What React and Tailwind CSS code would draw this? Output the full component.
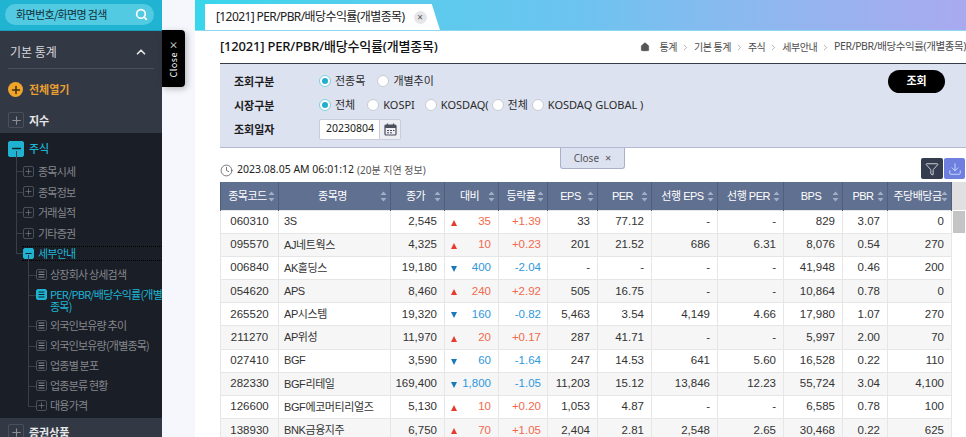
import React from "react";
import { Search, ChevronUp, Plus, Minus, House, ChevronRight, Clock, Funnel, Download } from "lucide-react";

const sans = "font-['Noto_Sans','Noto_Sans_CJK_KR',sans-serif]";
const cjk = "font-['Liberation_Sans','Noto_Sans_CJK_KR',sans-serif]";

const COLS = [
  ["종목코드", 58], ["종목명", 112], ["종가", 54], ["대비", 54], ["등락률", 49], ["EPS", 50],
  ["PER", 54], ["선행 EPS", 66], ["선행 PER", 66], ["BPS", 59], ["PBR", 45], ["주당배당금", 64],
];

const ROWS = [
  ["060310", "3S", "2,545", "u", "35", "+1.39", "33", "77.12", "-", "-", "829", "3.07", "0"],
  ["095570", "AJ네트웍스", "4,325", "u", "10", "+0.23", "201", "21.52", "686", "6.31", "8,076", "0.54", "270"],
  ["006840", "AK홀딩스", "19,180", "d", "400", "-2.04", "-", "-", "-", "-", "41,948", "0.46", "200"],
  ["054620", "APS", "8,460", "u", "240", "+2.92", "505", "16.75", "-", "-", "10,864", "0.78", "0"],
  ["265520", "AP시스템", "19,320", "d", "160", "-0.82", "5,463", "3.54", "4,149", "4.66", "17,980", "1.07", "270"],
  ["211270", "AP위성", "11,970", "u", "20", "+0.17", "287", "41.71", "-", "-", "5,997", "2.00", "70"],
  ["027410", "BGF", "3,590", "d", "60", "-1.64", "247", "14.53", "641", "5.60", "16,528", "0.22", "110"],
  ["282330", "BGF리테일", "169,400", "d", "1,800", "-1.05", "11,203", "15.12", "13,846", "12.23", "55,724", "3.04", "4,100"],
  ["126600", "BGF에코머티리얼즈", "5,130", "u", "10", "+0.20", "1,053", "4.87", "-", "-", "6,585", "0.78", "100"],
  ["138930", "BNK금융지주", "6,750", "u", "70", "+1.05", "2,404", "2.81", "2,548", "2.65", "30,468", "0.22", "625"],
];

function SortIcon() {
  return (
    <svg width="7" height="11" viewBox="0 0 7 11" className="absolute right-[3px] top-[9px]">
      <path d="M3.5 0.5 L6.5 4 H0.5 Z" fill="#9fb0c8" />
      <path d="M3.5 10.5 L6.5 7 H0.5 Z" fill="#9fb0c8" />
    </svg>
  );
}

function Square({ open, active, small, doc, className = "" }) {
  const size = small ? "w-[11px] h-[11px]" : "w-[16px] h-[16px]";
  const tone = active ? "bg-[#1fb3d1] border-[#1fb3d1] text-[#10222b]" : "border-[#4a4f5c] text-[#8c8f96]";
  return (
    <span className={`${size} ${tone} border rounded-[2px] flex items-center justify-center shrink-0 ${className}`}>
      {doc ? (
        <svg width="7" height="7" viewBox="0 0 7 7"><path d="M0.5 1 H6.5 M0.5 3.5 H6.5 M0.5 6 H6.5" stroke="currentColor" strokeWidth="1" /></svg>
      ) : open ? (
        <Minus size={small ? 9 : 13} strokeWidth={3} />
      ) : (
        <Plus size={small ? 9 : 13} strokeWidth={small ? 1.5 : 2} />
      )}
    </span>
  );
}

function Lv2({ children, open, active, dotted, last }) {
  return (
    <div className="relative h-[20.6px] shrink-0 flex items-center pl-[23px]">
      <span className={`absolute left-[16px] top-[-10px] w-px ${last ? "h-[20px]" : "h-[21px]"} bg-[#3a3e49]`} />
      <span className="absolute left-[16px] top-[10px] w-[7px] h-px bg-[#3a3e49]" />
      {dotted && <span className="absolute left-[22px] right-0 top-[3px] bottom-[3px] border-y border-dotted border-[#000]" />}
      <Square small open={open} active={active} />
      <span className={`ml-[4px] text-[11px] tracking-[-0.8px] ${active ? "text-[#1fb5d5]" : "text-[#85878c]"}`}>{children}</span>
    </div>
  );
}

function Lv3({ children, plus, active, tall }) {
  return (
    <div className={`relative shrink-0 flex pl-[36px] ${tall ? "h-[31px] items-start" : "h-[20px] items-center"}`}>
      <span className="absolute left-[28px] top-[-10px] w-px h-[20px] bg-[#3a3e49]" />
      {tall && <span className="absolute left-[28px] top-[10px] w-px h-[21px] bg-[#3a3e49]" />}
      <span className="absolute left-[28px] top-[10px] w-[8px] h-px bg-[#3a3e49]" />
      <Square small doc={!plus} active={active} className={tall ? "mt-[4px]" : ""} />
      <span className={`ml-[3px] text-[11px] tracking-[-0.8px] whitespace-pre ${tall ? "leading-[12px] mt-[3px]" : "leading-[13px]"} ${active ? "text-[#1fb5d5]" : "text-[#85878c]"}`}>{children}</span>
    </div>
  );
}

function Sidebar() {
  return (
    <aside className="w-[162px] shrink-0 h-full flex flex-col">
      <div className="h-[31px] shrink-0 bg-[#20b4d2] pl-[5px] pr-[5px] pt-[4px] border-b border-[#1d9fba]">
        <div className="h-[21px] w-[149px] rounded-full bg-[#52cbe2] flex items-center pl-[11px] pr-[6px] justify-between">
          <span className="text-[11px] text-[#12303a] tracking-[-0.65px]">화면번호/화면명 검색</span>
          <Search size={13} strokeWidth={3} className="text-white" />
        </div>
      </div>
      <div className="h-[102px] shrink-0 bg-[#333845] px-[8px] flex flex-col">
        <div className="h-[38px] flex items-center justify-between pl-[2px] pr-[6px] border-b border-[#4b4f5b] shrink-0">
          <span className="text-[12px] text-[#d8d9dc] mt-[4px]">기본 통계</span>
          <ChevronUp size={14} strokeWidth={3} className="text-[#e3e4e6] mt-[4px]" />
        </div>
        <div className="flex items-center h-[41px] shrink-0">
          <span className="w-[15px] h-[15px] rounded-full bg-[#f0a52a] flex items-center justify-center text-[#3a2c10]">
            <Plus size={12} strokeWidth={3} />
          </span>
          <span className="ml-[6px] text-[11px] font-bold text-[#e89f32]">전체열기</span>
        </div>
        <div className="flex items-center h-[19px] shrink-0 pt-[1px]">
          <Square />
          <span className="ml-[5px] text-[11px] font-semibold text-[#e6e7e9]">지수</span>
        </div>
      </div>
      <div className="h-[285px] shrink-0 bg-[#1a1e27] flex flex-col pt-[4px]">
        <div className="flex items-center h-[24px] pb-[1px] pl-[8px] shrink-0">
          <Square open active />
          <span className="ml-[5px] text-[11px] font-medium text-[#1fb5d5]">주식</span>
        </div>
        <Lv2>종목시세</Lv2>
        <Lv2>종목정보</Lv2>
        <Lv2>거래실적</Lv2>
        <Lv2>기타증권</Lv2>
        <Lv2 open active dotted last>세부안내</Lv2>
        <div className="h-[1px] shrink-0" />
        <Lv3>상장회사 상세검색</Lv3>
        <Lv3 active tall>{"PER/PBR/배당수익률(개별\n종목)"}</Lv3>
        <Lv3>외국인보유량 추이</Lv3>
        <Lv3>외국인보유량(개별종목)</Lv3>
        <Lv3>업종별 분포</Lv3>
        <Lv3>업종분류 현황</Lv3>
        <Lv3 plus>대용가격</Lv3>
      </div>
      <div className="flex-1 bg-[#333845] pl-[8px] pt-[6px] flex items-start">
        <Square />
        <span className="ml-[5px] text-[11px] font-semibold text-[#e6e7e9]">증권상품</span>
      </div>
    </aside>
  );
}

function Radio({ on, children, gap = "mr-[8px]" }) {
  return (
    <span className={`inline-flex items-center ${gap}`}>
      <span className={`w-[12px] h-[12px] rounded-full border shrink-0 flex items-center justify-center ${on ? "bg-white border-[#7fd0e4]" : "bg-white border-[#c9cbd1]"}`}>
        {on && <span className="w-[6px] h-[6px] rounded-full bg-[#21aecf]" />}
      </span>
      <span className="ml-[4px] text-[11px] text-[#2a2a2a] whitespace-nowrap">{children}</span>
    </span>
  );
}

function Label({ children }) {
  return <span className="w-[85px] text-[11px] font-semibold text-[#1d1d1d] mt-[2px]">{children}</span>;
}

function Crumb({ children }) {
  return (
    <>
      <span className="text-[10px] tracking-[-0.5px]">{children}</span>
      <ChevronRight size={9} className="mx-[4px] text-[#999]" />
    </>
  );
}

function Main() {
  return (
    <main className="flex-1 min-w-0 h-full flex flex-col bg-white relative overflow-hidden">
      <div className="h-[31px] shrink-0 bg-gradient-to-r from-[#37d6eb] via-[#6cc3ef] to-[#a9a9f0] border-b border-[#8fd8f2] flex items-end pl-[10px]">
        <div className={`h-[26px] w-[235px] bg-white [clip-path:polygon(0_0,96.5%_0,100%_100%,0_100%)] flex items-center pl-[11px] ${sans}`}>
          <span className="text-[12px] text-[#222] tracking-[-0.6px] whitespace-nowrap">[12021] PER/PBR/배당수익률(개별종목)</span>
          <span className="ml-[9px] w-[13px] h-[13px] rounded-full bg-[#e6e6ea] flex items-center justify-center text-[#555] text-[10px] leading-none shrink-0">×</span>
        </div>
      </div>

      <div className="h-[33px] shrink-0 ml-[25px] flex items-center justify-between border-b border-[#333d4a]">
        <h1 className={`text-[13px] font-medium text-[#111] tracking-[-0.2px] whitespace-nowrap ${sans}`}>[12021] PER/PBR/배당수익률(개별종목)</h1>
        <nav className={`flex items-center text-[#4d4d4d] whitespace-nowrap ${sans}`}>
          <House size={10} fill="#555" strokeWidth={1} className="text-[#555] mr-[10px]" />
          <Crumb>통계</Crumb>
          <Crumb>기본 통계</Crumb>
          <Crumb>주식</Crumb>
          <Crumb>세부안내</Crumb>
          <span className="text-[10.5px] tracking-[-0.4px]">PER/PBR/배당수익률(개별종목)</span>
        </nav>
      </div>

      <section className={`h-[84px] shrink-0 ml-[25px] bg-[#dde2f0] border-b border-[#b3b9d1] pl-[14px] pr-[21px] relative ${sans}`}>
        <div className="h-[24px] mt-[5px] flex items-center">
          <Label>조회구분</Label>
          <Radio on gap="mr-[12px]">전종목</Radio>
          <Radio>개별추이</Radio>
        </div>
        <div className="h-[24px] flex items-center">
          <Label>시장구분</Label>
          <Radio on gap="mr-[12px]">전체</Radio>
          <Radio gap="mr-[10px]">KOSPI</Radio>
          <Radio gap="mr-[3px]">KOSDAQ(</Radio>
          <Radio gap="mr-[4px]">전체</Radio>
          <Radio>KOSDAQ GLOBAL )</Radio>
        </div>
        <div className="h-[24px] flex items-center">
          <Label>조회일자</Label>
          <div className="flex h-[21px]">
            <span className="w-[61px] bg-white border border-[#c9cdda] rounded-l-[2px] flex items-center pl-[6px] text-[10.5px] text-[#222]">20230804</span>
            <span className="w-[21px] bg-[#eceef4] border border-l-0 border-[#c9cdda] rounded-r-[2px] flex items-center justify-center">
              <svg width="13" height="13" viewBox="0 0 13 13">
                <rect x="1" y="2" width="11" height="10" rx="1" fill="none" stroke="#4a4f5c" strokeWidth="1.2" />
                <rect x="1" y="2" width="11" height="3" fill="#4a4f5c" />
                <path d="M3.5 0.5 V3 M9.5 0.5 V3" stroke="#4a4f5c" strokeWidth="1.2" />
                <path d="M3 7.5 H5 M6 7.5 H8 M9 7.5 H10.5 M3 9.8 H5 M6 9.8 H8" stroke="#4a4f5c" strokeWidth="1" />
              </svg>
            </span>
          </div>
        </div>
        <button className="absolute right-[21px] top-[6px] w-[57px] h-[23px] rounded-full bg-black text-white text-[11px] font-bold">조회</button>
      </section>

      <button className={`absolute left-[365px] top-[148px] w-[65px] h-[21px] bg-[#dde2f0] border border-t-0 border-[#a9b0cc] rounded-b-[3px] text-[10px] text-[#555] flex items-center justify-center z-10 ${sans}`}>
        Close<span className="ml-[6px] text-[11px]">×</span>
      </button>

      <div className="h-[34px] shrink-0 ml-[25px] flex items-end justify-between pr-[1px] pb-[3px]">
        <div className={`flex items-center text-[#222] mb-[1px] ${sans}`}>
          <Clock size={13} strokeWidth={1.3} className="text-[#444] mr-[4px]" />
          <span className="text-[10.5px]">2023.08.05 AM 06:01:12</span>
          <span className="ml-[3px] text-[#555] text-[10px]">(20분 지연 정보)</span>
        </div>
        <div className="flex gap-[1px]">
          <span className="w-[22px] h-[21px] bg-[#333d4f] rounded-[2px] flex items-center justify-center">
            <Funnel size={14} strokeWidth={1.3} className="text-white" />
          </span>
          <span className="w-[21px] h-[21px] bg-[#6e7fe0] rounded-[2px] flex items-center justify-center">
            <Download size={14} strokeWidth={1.5} className="text-[#cfe4ff]" />
          </span>
        </div>
      </div>

      <div className="ml-[25px] flex flex-1 min-h-0 overflow-hidden">
        <table className={`w-[731px] table-fixed border-collapse text-[11.5px] shrink-0 self-start ${cjk}`}>
          <colgroup>
            {COLS.map(([n, w]) => <col key={n} style={{ width: w }} />)}
          </colgroup>
          <thead>
            <tr className="h-[28px] bg-[#5f7090]">
              {COLS.map(([n]) => (
                <th key={n} className="relative border-x border-[#4e5e7c] font-normal text-white text-[11px] tracking-[-0.5px] text-center pr-[4px] whitespace-nowrap overflow-hidden">
                  {n}<SortIcon />
                </th>
              ))}
            </tr>
          </thead>
          <tbody>
            {ROWS.map((r, i) => {
              const up = r[3] === "u";
              const tone = up ? "text-[#f2694c]" : "text-[#2f98dd]";
              return (
                <tr key={r[0]} className={`h-[23.2px] text-[#333] ${i % 2 ? "bg-[#f6f6f6]" : "bg-white"}`}>
                  <td className="border border-[#e6e6e6] text-center">{r[0]}</td>
                  <td className="border border-[#e6e6e6] pl-[5px] text-[11px] tracking-[-0.4px] whitespace-nowrap overflow-hidden">{r[1]}</td>
                  <td className="border border-[#e6e6e6] text-right pr-[7px]">{r[2]}</td>
                  <td className={`border border-[#e6e6e6] pr-[7px] pl-[6px] ${tone}`}>
                    <div className="flex items-center justify-between">
                      <span className={`w-0 h-0 border-x-[3px] border-x-transparent ${up ? "border-b-[6px] border-b-[#e8392f] mt-[2px]" : "border-t-[6px] border-t-[#1d78b8] mt-[2px]"}`} />
                      <span>{r[4]}</span>
                    </div>
                  </td>
                  <td className={`border border-[#e6e6e6] text-right pr-[6px] ${tone}`}>{r[5]}</td>
                  {r.slice(6).map((c, j) => (
                    <td key={j} className="border border-[#e6e6e6] text-right pr-[7px]">{c}</td>
                  ))}
                </tr>
              );
            })}
          </tbody>
        </table>
        <div className="flex-1 flex flex-col">
          <div className="h-[28px] bg-[#e0e0e0]" />
          <div className="h-[22px] mt-[1px] mx-[1px] bg-[#c4c4c4]" />
        </div>
      </div>
    </main>
  );
}

export default function App() {
  return (
    <div className="w-[966px] h-[437px] overflow-hidden flex relative font-['Noto_Sans_CJK_KR','Noto_Sans',sans-serif]">
      <Sidebar />
      <div className="w-[33px] shrink-0 bg-[#f5f7fc]" />
      <Main />
      <div className="absolute left-[162px] top-[30px] w-[23px] h-[57px] bg-black rounded-r-[4px] flex items-center justify-center shadow-[2px_2px_6px_rgba(0,0,0,0.25)]">
        <span className="[writing-mode:vertical-rl] rotate-180 text-white text-[9px] tracking-[0.5px]">Close ×</span>
      </div>
    </div>
  );
}
